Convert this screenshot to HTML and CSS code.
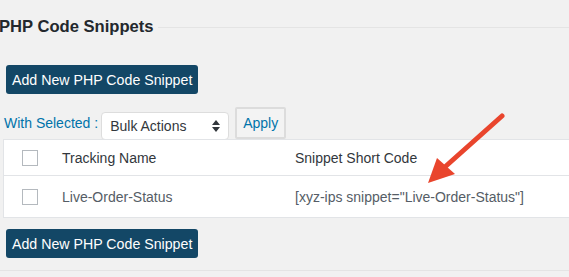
FILE: index.html
```html
<!DOCTYPE html>
<html>
<head>
<meta charset="utf-8">
<title>PHP Code Snippets</title>
<link rel="stylesheet" href="styles.css">
</head>
<body>
<div class="wrap">
    <h2 class="page-title">PHP Code Snippets</h2>

    <button class="btn-primary btn-top">Add New PHP Code Snippet</button>

    <div class="bulk-row">
        <span class="bulk-label">With Selected :</span>
        <div class="select-box">
            <span>Bulk Actions</span>
            <svg class="arrows" width="8" height="12" viewBox="0 0 8 12">
                <path d="M4 0 L8 5 H0 Z M4 12 L0 7 H8 Z" fill="#32373c"/>
            </svg>
        </div>
        <button class="btn-apply">Apply</button>
    </div>

    <div class="table-wrap">
        <table class="snippets">
            <thead>
                <tr>
                    <th class="col-check"><span class="checkbox"></span></th>
                    <th class="col-name">Tracking Name</th>
                    <th>Snippet Short Code</th>
                </tr>
            </thead>
            <tbody>
                <tr>
                    <td class="col-check"><span class="checkbox"></span></td>
                    <td class="col-name">Live-Order-Status</td>
                    <td>[xyz-ips snippet="Live-Order-Status"]</td>
                </tr>
            </tbody>
        </table>
        <!-- 설명용 화살표 -->
        <svg class="pointer" width="90" height="80" viewBox="0 0 90 80">
            <line x1="78" y1="3" x2="22" y2="53" stroke="#e9452d" stroke-width="5" stroke-linecap="round"/>
            <path d="M4 70 L13 45 L31 61 Z" fill="#e9452d"/>
        </svg>
    </div>

    <button class="btn-primary btn-bottom">Add New PHP Code Snippet</button>

    <div class="footer-line"></div>
</div>
</body>
</html>
```

FILE: styles.css
```css
html, body {
    margin: 0;
    padding: 0;
    background-color: #f1f1f1;
}

body {
    font-family: "Liberation Sans", Arial, sans-serif;
    color: #32373c;
    font-size: 14px;
}

.wrap {
    padding: 0 0 0 6px;
    overflow: hidden;
}

.page-title {
    display: flex;
    align-items: center;
    margin: 16px 0 0 -7px;
    font-size: 16.6px;
    font-weight: bold;
    color: #23282d;
    line-height: 22px;
}

.page-title::after {
    content: "";
    flex: 1;
    height: 1px;
    margin-left: 4px;
    background-color: #e4e4e4;
}

.btn-primary {
    display: block;
    height: 29px;
    padding: 0 6px;
    background-color: #134766;
    color: #ffffff;
    border: none;
    border-radius: 3px;
    font-family: inherit;
    font-size: 14.2px;
}

.btn-top {
    margin-top: 27px;
}

.btn-bottom {
    margin-top: 11px;
}

.bulk-row {
    display: flex;
    align-items: center;
    margin: 13px 0 0 -2px;
    height: 32px;
}

.bulk-label {
    color: #0073aa;
    font-size: 14px;
}

.select-box {
    display: flex;
    justify-content: space-between;
    align-items: center;
    box-sizing: border-box;
    width: 128px;
    height: 28px;
    margin-left: 3px;
    margin-top: 5px;
    padding: 0 8px 0 8px;
    background-color: #ffffff;
    border: 1px solid #dddddd;
    border-radius: 4px;
    font-size: 14px;
}

.btn-apply {
    box-sizing: border-box;
    height: 32px;
    width: 51px;
    margin-left: 6px;
    padding: 0;
    background-color: #f3f3f3;
    border: 2px solid #dcdcdc;
    border-radius: 2px;
    color: #0073aa;
    font-family: inherit;
    font-size: 14px;
}

.table-wrap {
    position: relative;
    margin: 0 -20px 0 -3px;
}

.snippets {
    width: 100%;
    border-collapse: collapse;
    background-color: #ffffff;
    border: 1px solid #e2e4e7;
}

.snippets th, .snippets td {
    text-align: left;
    font-weight: normal;
    padding: 0;
    font-size: 14px;
}

.snippets th {
    height: 35px;
    border-bottom: 1px solid #e2e4e7;
    color: #32373c;
}

.snippets td {
    height: 41px;
    color: #555d66;
}

.snippets .col-check {
    width: 40px;
    padding-left: 18px;
}

.snippets .col-name {
    width: 233px;
}

.checkbox {
    display: block;
    width: 14px;
    height: 14px;
    border: 1px solid #b4b9be;
    background-color: #ffffff;
}

.pointer {
    position: absolute;
    left: 421px;
    top: -26px;
}

.footer-line {
    height: 1px;
    margin: 12px 0 0 -6px;
    background-color: #e4e4e4;
}
```
